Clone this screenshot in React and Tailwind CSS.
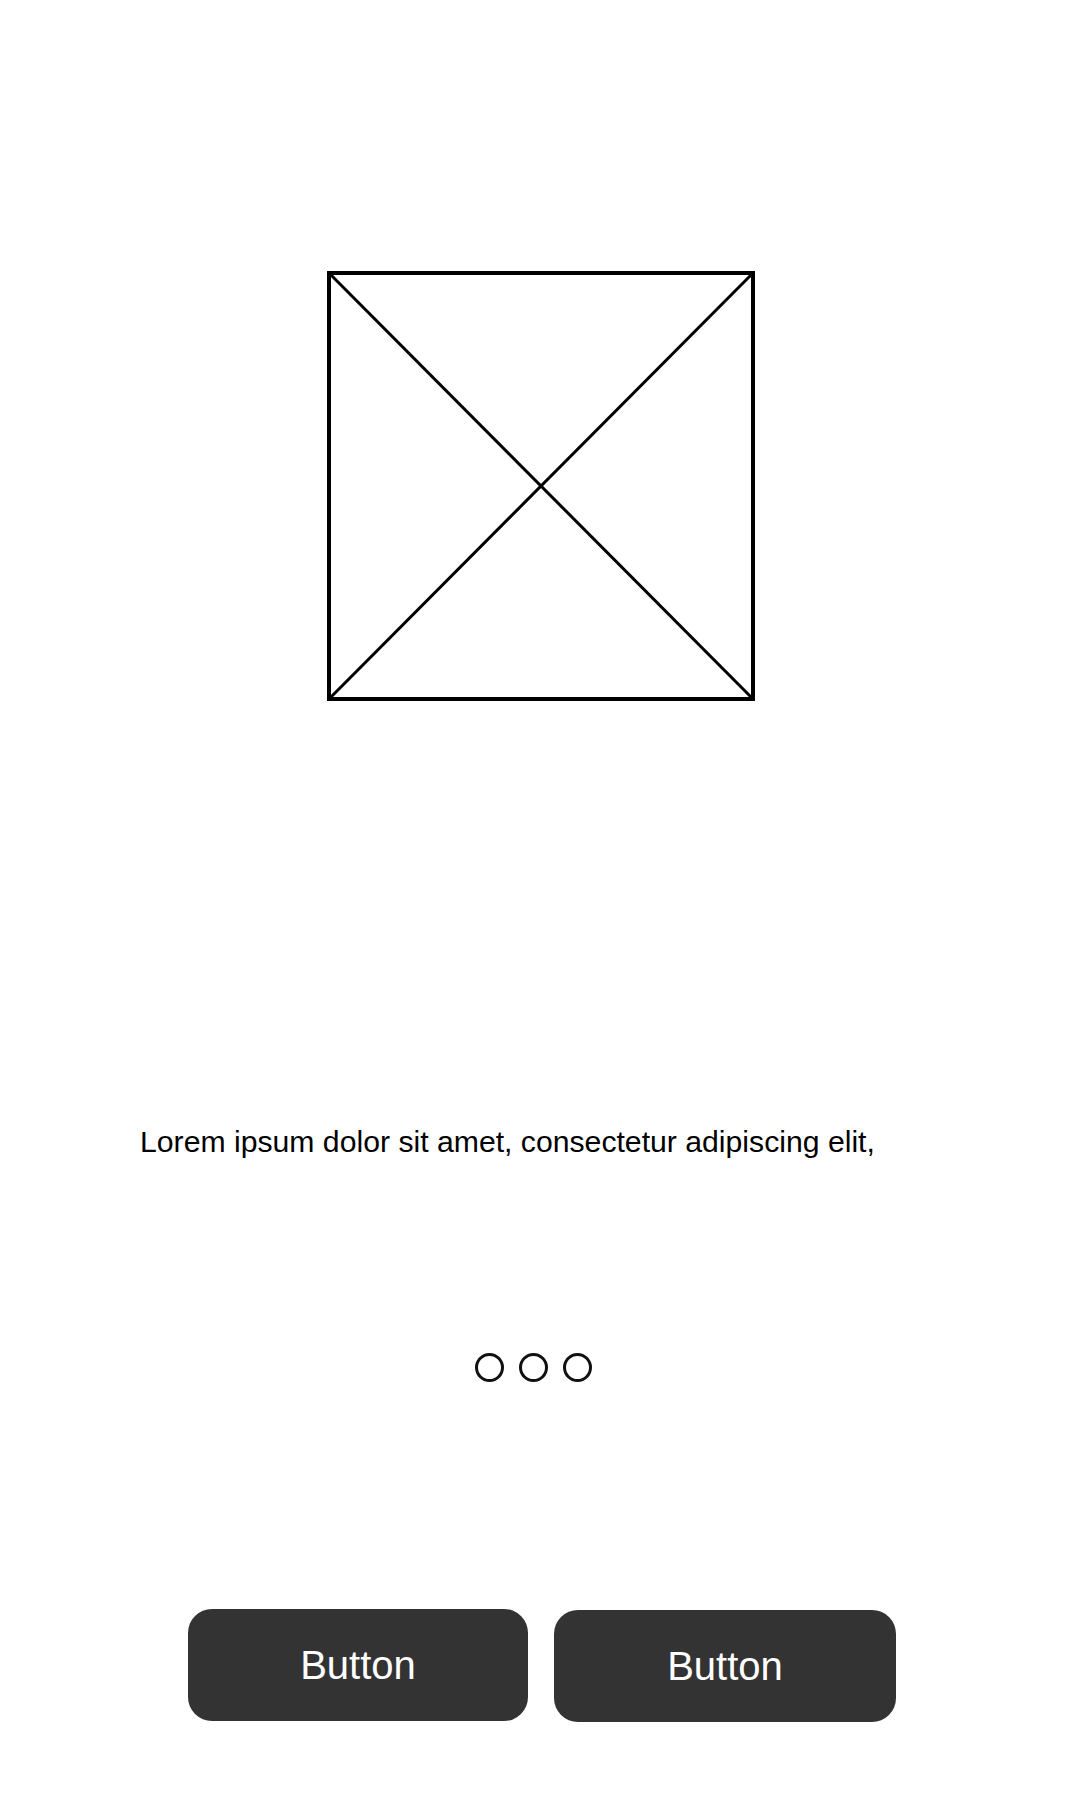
export default function App() {
  const font = { fontFamily: '"Liberation Sans", Arial, sans-serif' };
  return (
    <div className="w-[1080px] h-[1800px] bg-white flex flex-col" style={font}>
      <div className="mt-[271px] ml-[327px] w-[428px] h-[430px]">
        <svg width="428" height="430" viewBox="0 0 428 430">
          <rect x="2" y="2" width="424" height="426" fill="none" stroke="#000" strokeWidth="4" />
          <line x1="2" y1="2" x2="426" y2="428" stroke="#000" strokeWidth="3" />
          <line x1="426" y1="2" x2="2" y2="428" stroke="#000" strokeWidth="3" />
        </svg>
      </div>
      <p className="mt-[424px] pl-[140px] text-[30.2px] leading-[34px] text-black">
        Lorem ipsum dolor sit amet, consectetur adipiscing elit,
      </p>
      <div className="mt-[194px] pl-[475px] flex gap-[15px]">
        <div className="w-[29px] h-[29px] rounded-full border-[3px] border-[#111]" />
        <div className="w-[29px] h-[29px] rounded-full border-[3px] border-[#111]" />
        <div className="w-[29px] h-[29px] rounded-full border-[3px] border-[#111]" />
      </div>
      <div className="mt-[227px] pl-[188px] flex items-start gap-[26px]">
        <button className="w-[340px] h-[112px] rounded-[24px] bg-[#333333] text-white text-[40px] leading-none flex items-center justify-center">
          Button
        </button>
        <button className="mt-[1px] w-[342px] h-[112px] rounded-[24px] bg-[#333333] text-white text-[40px] leading-none flex items-center justify-center">
          Button
        </button>
      </div>
    </div>
  );
}
